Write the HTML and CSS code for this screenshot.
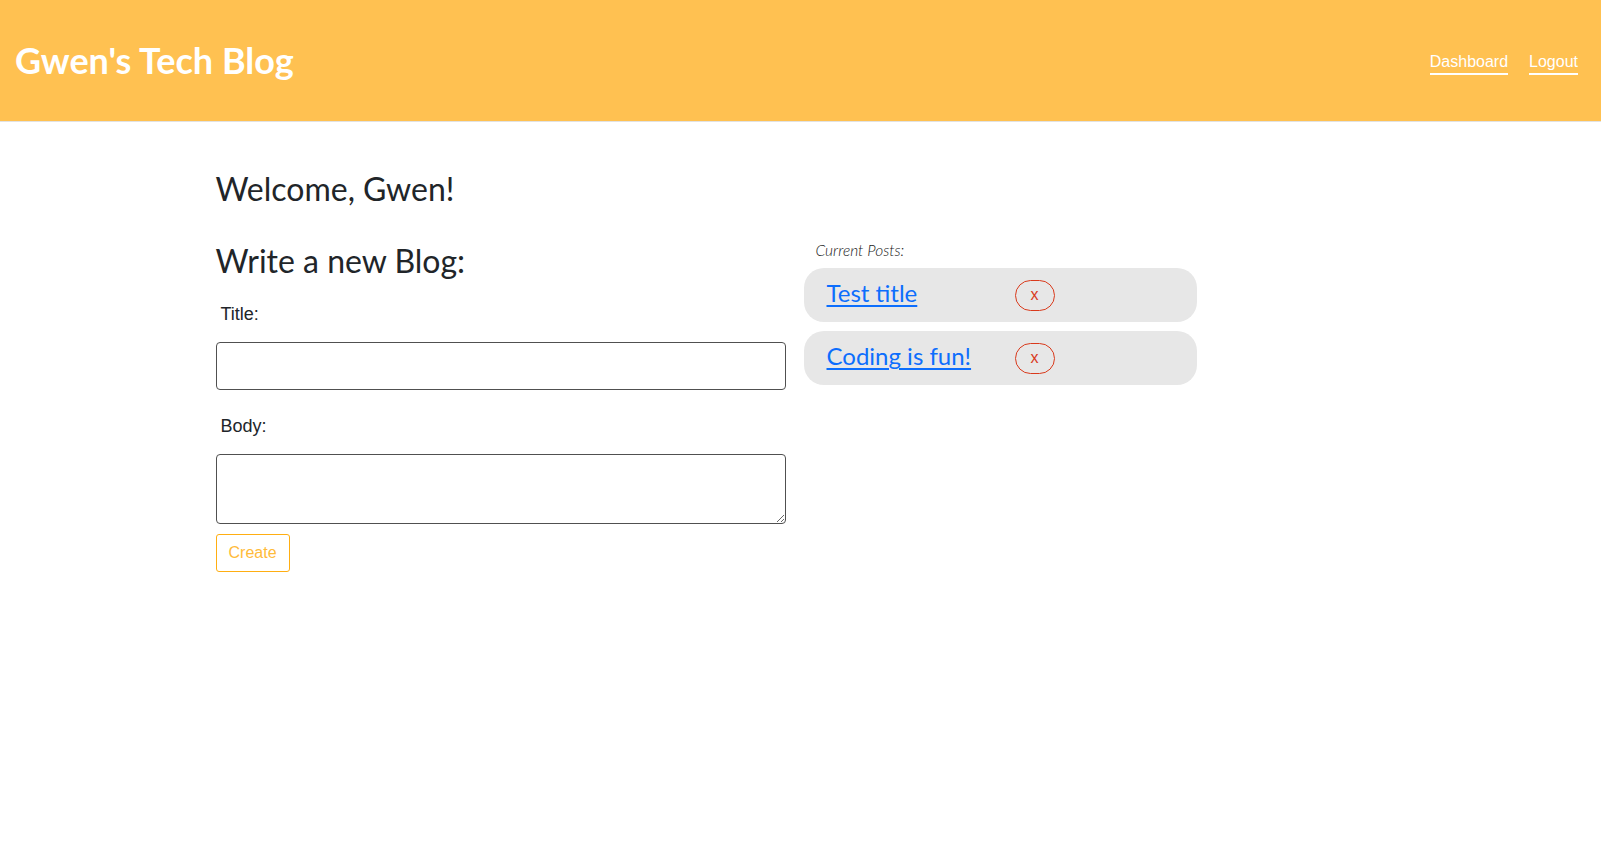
FILE: index.html
```html
<!DOCTYPE html>
<html lang="en">
<head>
<meta charset="utf-8">
<title>Gwen's Tech Blog</title>
<link rel="stylesheet" href="styles.css">
</head>
<body>
<header class="site-header">
  <h1 class="brand">Gwen's Tech Blog</h1>
  <nav class="nav">
    <a class="nav-link" href="#">Dashboard</a>
    <a class="nav-link" href="#">Logout</a>
  </nav>
</header>
<main class="container">
  <h2 class="welcome">Welcome, Gwen!</h2>
  <div class="row">
    <section class="new-post">
      <h2 class="section-title">Write a new Blog:</h2>
      <form class="post-form">
        <label class="field-label" for="title">Title:</label>
        <input class="field-input" id="title" type="text">
        <label class="field-label body-label" for="body">Body:</label>
        <textarea class="field-textarea" id="body"></textarea>
        <button class="btn-create" type="button">Create</button>
      </form>
    </section>
    <section class="posts">
      <p class="posts-label">Current Posts:</p>
      <div class="post-card">
        <a class="post-link" href="#">Test title</a>
        <button class="btn-delete" type="button">x</button>
      </div>
      <div class="post-card">
        <a class="post-link" href="#">Coding is fun!</a>
        <button class="btn-delete" type="button">x</button>
      </div>
    </section>
  </div>
</main>
</body>
</html>
```
FILE: styles.css
```css
* { box-sizing: border-box; }

body {
  margin: 0;
  font-family: Lato, "Liberation Sans", Arial, sans-serif;
  font-size: 16px;
  line-height: 1.5;
  color: #212529;
  background: #fff;
}

.site-header {
  height: 122px;
  background: #ffc151;
  border-bottom: 1px solid #e2e2e2;
  display: flex;
  align-items: center;
  justify-content: space-between;
  padding: 0 23px 0 15px;
}

.brand {
  margin: 0;
  font-family: Lato, sans-serif;
  font-weight: 700;
  font-size: 36px;
  line-height: 1.2;
  color: #fff;
}

.nav {
  display: flex;
  gap: 21px;
  margin-top: 7px;
}

.nav-link {
  font-family: "Liberation Sans", Arial, sans-serif;
  font-size: 16px;
  line-height: 18px;
  color: #fff;
  text-decoration: none;
  border-bottom: 2px solid #fff;
  padding-bottom: 2px;
}

.container {
  width: 1170px;
  margin: 0 auto;
}

.welcome {
  margin: 48px 0 0;
  font-size: 32px;
  font-weight: 400;
  line-height: 1.2;
}

.row {
  display: grid;
  grid-template-columns: 570px 393px;
  column-gap: 18px;
  margin-top: 31px;
}

.section-title {
  margin: 3px 0 0;
  font-size: 32px;
  font-weight: 400;
  line-height: 1.2;
}

.post-form {
  display: flex;
  flex-direction: column;
  align-items: flex-start;
}

.field-label {
  font-family: "Liberation Sans", Arial, sans-serif;
  font-size: 18px;
  line-height: 21px;
  padding-left: 5px;
  margin-top: 23px;
}

.body-label { margin-top: 26px; }

.field-input,
.field-textarea {
  width: 570px;
  border: 1px solid #505050;
  border-radius: 4px;
  background: #fff;
  font-family: "Liberation Sans", Arial, sans-serif;
  font-size: 16px;
  margin-top: 17px;
}

.field-input { height: 48px; }

.field-textarea {
  height: 70px;
  resize: vertical;
}

.btn-create {
  margin-top: 10px;
  height: 38px;
  padding: 0 12px;
  font-family: "Liberation Sans", Arial, sans-serif;
  font-size: 16px;
  color: #ffbb3a;
  background: #fff;
  border: 1px solid #ffae12;
  border-radius: 3px;
}

.posts-label {
  margin: -1px 0 6px 12px;
  font-style: italic;
  font-size: 15.5px;
  line-height: 24px;
  font-weight: 300;
  color: #1a1a1a;
}

.post-card {
  display: grid;
  grid-template-columns: 189px auto;
  align-items: center;
  justify-items: start;
  height: 54px;
  padding-left: 23px;
  margin-bottom: 9px;
  background: #e7e7e7;
  border-radius: 20px;
}

.post-link {
  font-size: 24px;
  line-height: 1.2;
  margin-bottom: 3px;
  color: #0d6efd;
  text-decoration: underline;
  text-underline-offset: 3px;
}

.btn-delete {
  width: 40px;
  height: 31px;
  padding: 0;
  margin-left: -1px;
  font-family: "Liberation Sans", Arial, sans-serif;
  font-size: 16px;
  color: #d93a1c;
  background: transparent;
  border: 1px solid #d93a1c;
  border-radius: 16px;
}
```
